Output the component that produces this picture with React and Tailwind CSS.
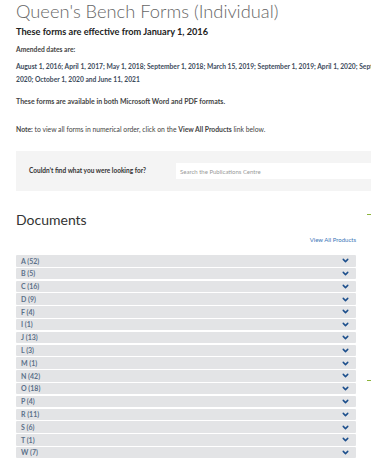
import { ChevronDown } from "lucide-react";

const groups = [
  "A (52)", "B (5)", "C (16)", "D (9)", "F (4)", "I (1)", "J (13)", "L (3)",
  "M (1)", "N (42)", "O (18)", "P (4)", "R (11)", "S (6)", "T (1)", "W (7)",
];

export default function App() {
  return (
    <div className="w-[371px] h-[466px] overflow-hidden bg-white font-['Lato',sans-serif] relative">
      <div className="w-[440px] pl-4">
        <h1 className="text-[18.3px] leading-[22px] font-light text-[#666]">
          Queen's Bench Forms (Individual)
        </h1>

        <h2 className="mt-[4px] text-[9.2px] leading-[12px] font-bold text-[#222]">
          These forms are effective from January 1, 2016
        </h2>

        <p className="mt-[6px] text-[6.7px] leading-[10px] font-bold text-[#444]">Amended dates are:</p>
        <p className="mt-[5.5px] text-[6.7px] leading-[13px] font-bold text-[#3d4b5c] whitespace-nowrap">
          August 1, 2016; April 1, 2017; May 1, 2018; September 1, 2018; March 15, 2019; September 1, 2019; April 1, 2020; September 1,
          <br />
          2020; October 1, 2020 and June 11, 2021
        </p>

        <p className="mt-[10.5px] text-[7px] leading-[10px] font-bold text-[#444]">
          These forms are available in both Microsoft Word and PDF formats.
        </p>

        <p className="mt-[18px] text-[6.8px] leading-[10px] text-[#444]">
          <span className="font-bold">Note:</span> to view all forms in numerical order, click on the{" "}
          <span className="font-bold">View All Products</span> link below.
        </p>

        <div className="mt-[17px] h-[40px] bg-[#f4f4f4] flex items-center">
          <div className="w-[160px] pl-[13px] text-[6.5px] font-bold text-[#333]">
            Couldn’t find what you were looking for?
          </div>
          <div className="h-[16px] flex-1 bg-white flex items-center pl-[4px] text-[6px] text-[#999]">
            Search the Publications Centre
          </div>
        </div>

        <div className="relative w-[340px]">
          <h3 className="mt-[20px] text-[14px] leading-[18px] text-[#333]">Documents</h3>
          <div className="absolute right-[-15px] top-[3px] w-[4px] h-[1px] bg-[#8cb43c]" />
          <div className="mt-[7px] text-right text-[6px] leading-[8px] text-[#3a76b8]">View All Products</div>

          <div className="mt-[11px] flex flex-col gap-[1.3px]">
            {groups.map((g) => (
              <div
                key={g}
                className="h-[11.5px] bg-[#e3e4e6] rounded-[1px] flex items-center justify-between pl-[5px] pr-[6px]"
              >
                <span className="text-[7px] font-bold text-[#5b7089]">{g}</span>
                <ChevronDown size={9} strokeWidth={4} className="text-[#1c4f8c]" />
              </div>
            ))}
          </div>
          <div className="absolute right-[-15px] top-[169px] w-[4px] h-[1px] bg-[#8cb43c]" />
        </div>
      </div>
    </div>
  );
}
